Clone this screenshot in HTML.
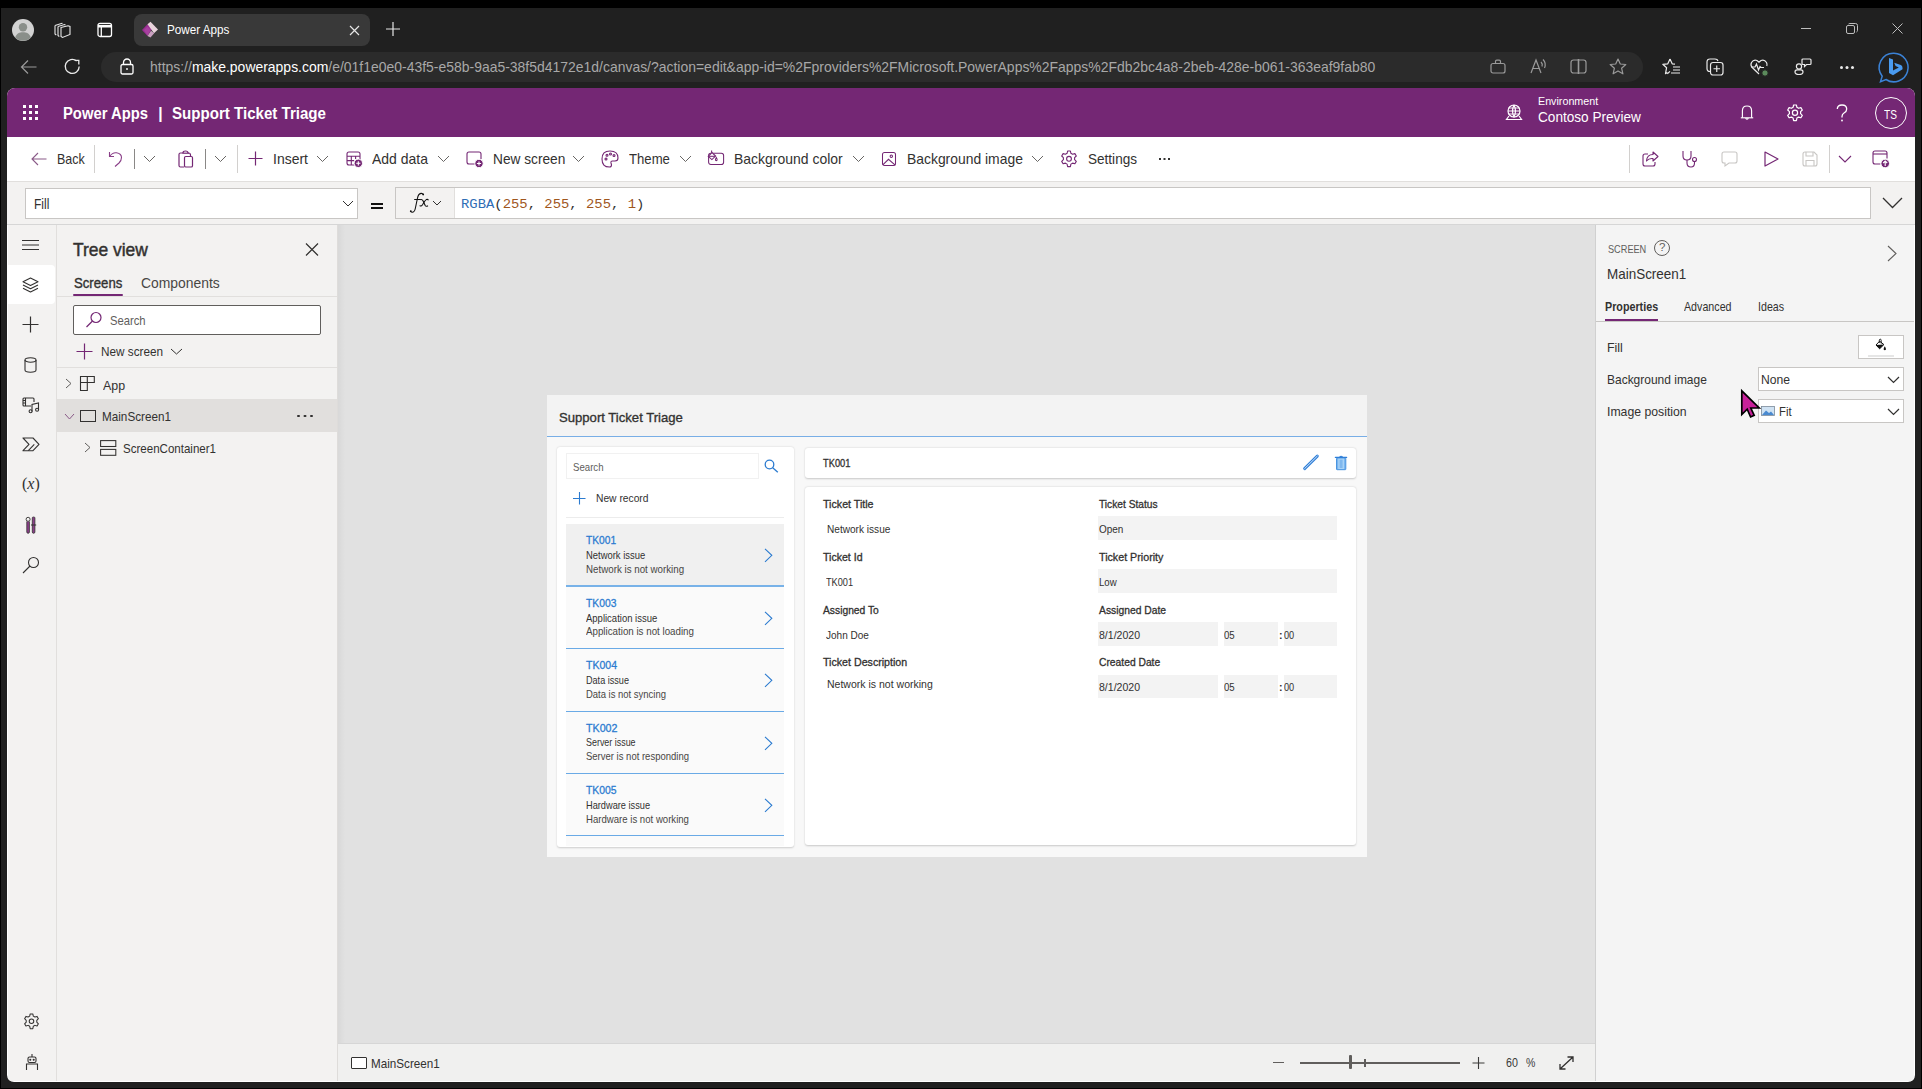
<!DOCTYPE html>
<html><head><meta charset="utf-8">
<style>
*{box-sizing:border-box;margin:0;padding:0}
html,body{width:1922px;height:1089px;overflow:hidden;background:#000;font-family:"Liberation Sans",sans-serif}
.a{position:absolute}
.t{position:absolute;white-space:nowrap;line-height:1;transform-origin:0 0}
svg{position:absolute;overflow:visible}
#win{position:absolute;left:1px;top:8px;width:1920px;height:1080px;background:#202020}
</style></head><body>

<div id="win"></div>
<!-- BROWSER CHROME -->
<div id="chrome">
  <!-- avatar -->
  <svg style="left:12px;top:19px" width="22" height="22" viewBox="0 0 22 22"><circle cx="11" cy="11" r="11" fill="#d2d2d2"/><circle cx="11" cy="8.2" r="4.2" fill="#8a8f8a"/><path d="M3.2 18.5 C4.5 14.5 7.5 13.3 11 13.3 C14.5 13.3 17.5 14.5 18.8 18.5 A11 11 0 0 1 3.2 18.5Z" fill="#8a8f8a"/></svg>
  <!-- workspaces -->
  <svg style="left:54px;top:21px" width="18" height="18" viewBox="0 0 18 18" fill="none" stroke="#e8e8e8" stroke-width="1.1"><path d="M1 4.5 L8 2.3 L8.5 2.5"/><path d="M1 4.5 V13 L2.3 14"/><path d="M4 5.5 L10.5 3.5 L11.5 4"/><path d="M4 5.5 V14.5 L5.3 15.5"/><path d="M7 6.5 L14 4.8 L16 5.5 V13.5 L8.5 16.5 L7 15.5 Z"/></svg>
  <!-- tab actions -->
  <svg style="left:97px;top:22px" width="16" height="16" viewBox="0 0 16 16" fill="none" stroke="#fff" stroke-width="1.3"><rect x="1" y="1.3" width="13.5" height="13.2" rx="2"/><path d="M1 4.2 H14.5" stroke-width="2.6"/><path d="M4.3 4 V14.5"/></svg>
  <!-- tab -->
  <div class="a" style="left:134px;top:14px;width:236px;height:32px;background:#393939;border-radius:8px"></div>
  <svg style="left:141px;top:21px" width="18" height="18" viewBox="0 0 18 18"><path d="M1 9 L6.5 3.3 L11 7.8 L6.5 15 Z" fill="#9b2e93"/><path d="M6.5 3.3 L9.5 0.8 L17 8.4 L13 12.2 Z" fill="#e9d3dc"/><path d="M6.5 15 L10 9.8 L13.2 12.2 L9.5 16.4 Z" fill="#c9a0c0"/><path d="M3 9 L6.5 5.5 L9.5 9 L6.5 14.5 Z" fill="#b04da8" opacity=".6"/></svg>
  <svg style="left:349px;top:25px" width="11" height="11" viewBox="0 0 11 11" stroke="#e6e6e6" stroke-width="1.2"><path d="M1 1 L10 10 M10 1 L1 10"/></svg>
  <svg style="left:385px;top:21px" width="16" height="16" viewBox="0 0 16 16" stroke="#e6e6e6" stroke-width="1.2"><path d="M8 1 V15 M1 8 H15"/></svg>
  <!-- window controls -->
  <div class="a" style="left:1801px;top:28px;width:10px;height:1px;background:#bdbdbd"></div>
  <svg style="left:1846px;top:23px" width="12" height="11" viewBox="0 0 12 11" fill="none" stroke="#bdbdbd" stroke-width="1"><rect x="0.5" y="2.5" width="8" height="8" rx="1.5"/><path d="M2.5 1 Q3 0.5 4 0.5 H9.5 Q11.5 0.5 11.5 2.5 V7.5 Q11.5 8.5 10.5 9"/></svg>
  <svg style="left:1892px;top:23px" width="11" height="11" viewBox="0 0 11 11" stroke="#bdbdbd" stroke-width="1"><path d="M0.5 0.5 L10.5 10.5 M10.5 0.5 L0.5 10.5"/></svg>
  <!-- nav -->
  <svg style="left:20px;top:59px" width="18" height="16" viewBox="0 0 18 16" fill="none" stroke="#9a9a9a" stroke-width="1.2"><path d="M16.5 8 H1.5 M8 1.5 L1.5 8 L8 14.5"/></svg>
  <svg style="left:64px;top:58px" width="18" height="18" viewBox="0 0 18 18" fill="none" stroke="#eaeaea" stroke-width="1.3"><path d="M15.2 8.5 A7 7 0 1 1 12.6 3"/><path d="M10.6 2.3 H14.8 V6.5" stroke-width="1.3"/></svg>
  <!-- address bar -->
  <div class="a" style="left:101px;top:52px;width:1542px;height:30px;background:#2b2b2b;border-radius:15px"></div>
  <svg style="left:120px;top:58px" width="14" height="17" viewBox="0 0 14 17" fill="none" stroke="#fff" stroke-width="1.3"><rect x="1" y="6.5" width="12" height="9.5" rx="1.5"/><path d="M3.5 6.5 V4.5 A3.5 3.5 0 0 1 10.5 4.5 V6.5"/><circle cx="7" cy="11" r=".9" fill="#fff" stroke="none"/></svg>
  <!-- in-bar icons -->
  <svg style="left:1490px;top:59px" width="16" height="15" viewBox="0 0 16 15" fill="none" stroke="#9a9a9a" stroke-width="1.2"><rect x="1" y="4.5" width="14" height="9.5" rx="2"/><path d="M5.5 4.5 V2.5 Q5.5 1.2 6.8 1.2 H9.2 Q10.5 1.2 10.5 2.5 V4.5"/></svg>
  <svg style="left:1530px;top:58px" width="17" height="16" viewBox="0 0 17 16" fill="none" stroke="#9a9a9a" stroke-width="1.2"><path d="M1 15 L6 2 L11 15 M2.8 10.5 H9.2"/><path d="M11 4 Q13 6 12 8.5"/><path d="M13 1.5 Q16.5 5 14.5 10"/></svg>
  <svg style="left:1570px;top:59px" width="17" height="15" viewBox="0 0 17 15" fill="none" stroke="#9a9a9a" stroke-width="1.2"><rect x="1" y="1" width="15" height="13" rx="2.5"/><path d="M8.5 0 V15" stroke-width="1.6"/></svg>
  <svg style="left:1609px;top:58px" width="18" height="17" viewBox="0 0 18 17" fill="none" stroke="#9a9a9a" stroke-width="1.2" stroke-linejoin="round"><path d="M9 1 L11.3 6 L16.8 6.5 L12.6 10.2 L13.9 15.8 L9 12.9 L4.1 15.8 L5.4 10.2 L1.2 6.5 L6.7 6 Z"/></svg>
  <!-- outside icons -->
  <svg style="left:1662px;top:58px" width="19" height="17" viewBox="0 0 19 17" fill="none" stroke="#eaeaea" stroke-width="1.2" stroke-linejoin="round"><path d="M8 1 L10.2 5.8 L13 6.1 M5.3 15.7 L8 13.4 M8 1 L5.8 5.8 L0.8 6.3 L4.6 9.7 L3.5 15.7 L5.3 14.6"/><path d="M11 9 H18 M11 12 H18 M9 15 H18"/></svg>
  <svg style="left:1706px;top:58px" width="18" height="18" viewBox="0 0 18 18" fill="none" stroke="#eaeaea" stroke-width="1.2"><path d="M4 13.5 Q1 13.5 1 10.5 V4 Q1 1 4 1 H9 Q11.5 1 12 3"/><rect x="4.5" y="4.5" width="12.5" height="12.5" rx="2.5"/><path d="M10.75 7.5 V14 M7.5 10.75 H14"/></svg>
  <svg style="left:1750px;top:59px" width="19" height="18" viewBox="0 0 19 18" fill="none" stroke="#eaeaea" stroke-width="1.2"><path d="M9 15 L2.5 8.8 Q0 6 1.5 3.5 Q3.5 0.2 7 1.5 L9 3.3 L11 1.5 Q14.5 0.2 16.5 3.5 Q17.5 5.5 16.8 7"/><path d="M1 8 H5 L6.5 5 L8.5 11 L10 7.5 L11 8.5 H14"/><circle cx="15" cy="14" r="3.2" fill="#5b8a5b" stroke="#202020" stroke-width="1"/></svg>
  <svg style="left:1794px;top:58px" width="18" height="17" viewBox="0 0 18 17" fill="none" stroke="#eaeaea" stroke-width="1.2"><circle cx="5" cy="8.5" r="2.6"/><path d="M1 14 Q1 11.8 3 11.8 H7 Q9 11.8 9 14 Q9 16.5 5 16.5 Q1 16.5 1 14Z"/><path d="M9 1 H16 Q17 1 17 2 V5.5 Q17 6.5 16 6.5 H12.5 L10.5 8.5 V6.5 H9 Q8 6.5 8 5.5 V2 Q8 1 9 1Z"/></svg>
  <div class="a" style="left:1840px;top:66px;width:3px;height:3px;border-radius:50%;background:#eaeaea;box-shadow:5.5px 0 0 #eaeaea,11px 0 0 #eaeaea"></div>
  <svg style="left:1878px;top:52px" width="32" height="31" viewBox="0 0 32 31"><path d="M16 1.2 A14.3 14.3 0 1 1 8 27.5 L2.5 29.8 L4.2 24.2 A14.3 14.3 0 0 1 16 1.2Z" fill="none" stroke="#3b82d6" stroke-width="1.5"/><path d="M11 6 L15 7.5 V18.5 L20.8 15.5 L17.6 14 L16.2 10.8 L22.8 13 Q24.5 13.8 24.5 15.8 V17.2 L15 23.2 L11 21 Z" fill="#4a9bf0"/></svg>
</div>
<!-- APP -->
<div class="a" id="app" style="left:7px;top:88px;width:1908px;height:994px;background:#fff;border-radius:8px 8px 7px 7px;overflow:hidden">
  <div class="a" id="hdr" style="left:0;top:0;width:1908px;height:49px;background:#742774"></div>
  <div class="a" id="tb" style="left:0;top:49px;width:1908px;height:45px;background:#fff;border-bottom:1px solid #e1dfdd"></div>
  <div class="a" id="fb" style="left:0;top:94px;width:1908px;height:43px;background:#f3f2f1;border-bottom:1px solid #d6d6d6"></div>
  <div class="a" id="rail" style="left:1px;top:137px;width:49px;height:856px;background:#f3f2f1;border-right:1px solid #e1dfdd"></div>
  <div class="a" id="tree" style="left:50px;top:137px;width:280px;height:856px;background:#f3f2f1"></div>
  <div class="a" id="canvas" style="left:330px;top:137px;width:1258px;height:856px;background:#e1e1e1"></div>
  <div class="a" id="props" style="left:1588px;top:137px;width:319px;height:856px;background:#f4f4f4;border-left:1px solid #d0d0d0"></div>
</div>

<!-- HEADER CONTENT -->
<div id="hdrc">
  <div class="a" style="left:23px;top:105px;width:3px;height:3px;background:#fff;box-shadow:6px 0 #fff,12px 0 #fff,0 6px #fff,6px 6px #fff,12px 6px #fff,0 12px #fff,6px 12px #fff,12px 12px #fff"></div>
  <svg style="left:1505px;top:104px" width="18" height="17" viewBox="0 0 18 17" fill="none" stroke="#fff" stroke-width="1.2"><circle cx="9" cy="7" r="6"/><path d="M3 7 H15 M9 1 Q6 7 9 13 Q12 7 9 1"/><path d="M3.5 4 H14.5 M3.5 10 H14.5" stroke-width=".9"/><path d="M4 12 L1.5 15.5 H16.5 L14 12" /></svg>
  <svg style="left:1740px;top:105px" width="14" height="16" viewBox="0 0 14 16" fill="none" stroke="#fff" stroke-width="1.15"><path d="M2.4 12.8 V5.8 Q2.4 1 7 1 Q11.6 1 11.6 5.8 V12.8"/><path d="M0.8 12.8 H13.2"/><path d="M5.6 13.2 Q7 15.2 8.4 13.2"/></svg>
  <svg style="left:1786px;top:104px" width="18" height="18" viewBox="0 0 18 18" fill="none" stroke="#fff" stroke-width="1.2"><path d="M7.6 1 H10.4 L10.9 3.3 L12.6 4.3 L14.9 3.6 L16.3 6 L14.6 7.7 V9.7 L16.3 11.4 L14.9 13.8 L12.6 13.1 L10.9 14.1 L10.4 16.6 H7.6 L7.1 14.1 L5.4 13.1 L3.1 13.8 L1.7 11.4 L3.4 9.7 V7.7 L1.7 6 L3.1 3.6 L5.4 4.3 L7.1 3.3 Z" stroke-linejoin="round"/><circle cx="9" cy="8.8" r="2.6"/></svg>
  <svg style="left:1836px;top:104px" width="12" height="18" viewBox="0 0 12 18" fill="none" stroke="#fff" stroke-width="1.3"><path d="M1.3 5 Q1.3 1 6 1 Q10.7 1 10.7 5 Q10.7 7.5 8 9 Q6 10.2 6 12.5 V13.5"/><circle cx="6" cy="16.5" r=".9" fill="#fff" stroke="none"/></svg>
  <div class="a" style="left:1875px;top:97px;width:32px;height:32px;border:1px solid #fff;border-radius:50%"></div>
</div>
<!-- TOOLBAR CONTENT -->
<div id="tbc" style="color:#323130">
  <svg style="left:31px;top:152px" width="16" height="14" viewBox="0 0 16 14" fill="none" stroke="#8a5a88" stroke-width="1.1"><path d="M15.5 7 H1 M7 1 L1 7 L7 13"/></svg>
  <div class="a" style="left:94px;top:145px;width:1px;height:28px;background:#d2d0ce"></div>
  <svg style="left:108px;top:151px" width="15" height="16" viewBox="0 0 15 16" fill="none" stroke="#8a3f88" stroke-width="1.1"><path d="M1.5 1 V5.5 H6"/><path d="M1.8 5.3 Q4.5 1.3 8.5 1.8 Q13.5 2.8 13.5 6.5 Q13.5 9.5 11 12 L7 15.5"/></svg>
  <div class="a" style="left:134px;top:149px;width:1px;height:20px;background:#8a8886"></div>
  <svg style="left:143px;top:155px" width="13" height="8" viewBox="0 0 13 8" fill="none" stroke="#605e5c" stroke-width="0.95"><path d="M1 1 L6.5 6.5 L12 1"/></svg>
  <svg style="left:178px;top:150px" width="16" height="18" viewBox="0 0 16 18" fill="none" stroke="#742774" stroke-width="1.2"><path d="M5 3 H2.5 Q1 3 1 4.5 V15.5 Q1 17 2.5 17 H6"/><path d="M5 3 Q5 1 7.5 1 Q10 1 10 3"/><path d="M4.5 3.2 H11"/><rect x="6.5" y="6.5" width="8" height="10.5" rx="1.3"/><path d="M10.5 3 Q12.5 3 12.5 5 V6.5"/></svg>
  <div class="a" style="left:205px;top:149px;width:1px;height:20px;background:#8a8886"></div>
  <svg style="left:214px;top:155px" width="13" height="8" viewBox="0 0 13 8" fill="none" stroke="#605e5c" stroke-width="0.95"><path d="M1 1 L6.5 6.5 L12 1"/></svg>
  <div class="a" style="left:237px;top:145px;width:1px;height:28px;background:#d2d0ce"></div>
  <svg style="left:248px;top:151px" width="15" height="15" viewBox="0 0 15 15" fill="none" stroke="#742774" stroke-width="1.2"><path d="M7.5 0.5 V14.5 M0.5 7.5 H14.5"/></svg>
  <svg style="left:316px;top:155px" width="13" height="8" viewBox="0 0 13 8" fill="none" stroke="#605e5c" stroke-width="0.95"><path d="M1 1 L6.5 6.5 L12 1"/></svg>
  <svg style="left:346px;top:151px" width="17" height="17" viewBox="0 0 17 17" fill="none" stroke="#742774" stroke-width="1.1"><rect x="1" y="1" width="13" height="13" rx="2"/><path d="M1 5.3 H14 M1 9.6 H8 M5.3 5.3 V14 M9.6 5.3 V8"/><circle cx="12.3" cy="12.3" r="4.2" fill="#742774" stroke="#fff" stroke-width="1"/><path d="M12.3 10.2 V14.4 M10.2 12.3 H14.4" stroke="#fff" stroke-width="1.1"/></svg>
  <svg style="left:437px;top:155px" width="13" height="8" viewBox="0 0 13 8" fill="none" stroke="#605e5c" stroke-width="0.95"><path d="M1 1 L6.5 6.5 L12 1"/></svg>
  <svg style="left:466px;top:151px" width="18" height="17" viewBox="0 0 18 17" fill="none" stroke="#742774" stroke-width="1.1"><path d="M9 13 H3 Q1 13 1 11 V3 Q1 1 3 1 H13 Q15 1 15 3 V8"/><circle cx="13" cy="12.5" r="4.2" fill="#742774" stroke="#fff" stroke-width="1"/><path d="M13 10.4 V14.6 M10.9 12.5 H15.1" stroke="#fff" stroke-width="1.1"/></svg>
  <svg style="left:572px;top:155px" width="13" height="8" viewBox="0 0 13 8" fill="none" stroke="#605e5c" stroke-width="0.95"><path d="M1 1 L6.5 6.5 L12 1"/></svg>
  <svg style="left:601px;top:150px" width="18" height="18" viewBox="0 0 18 18" fill="none" stroke="#742774" stroke-width="1.1"><path d="M9 1 Q17 1 17 8 Q17 11 14 11 H11.5 Q9.5 11 10 13 Q10.5 14.5 10.5 15 Q10.5 17 8.5 17 Q1 17 1 9 Q1 1 9 1Z"/><circle cx="5" cy="9" r="1"/><circle cx="6" cy="5.3" r="1"/><circle cx="9.5" cy="4" r="1"/><circle cx="13" cy="5.5" r="1"/></svg>
  <svg style="left:679px;top:155px" width="13" height="8" viewBox="0 0 13 8" fill="none" stroke="#605e5c" stroke-width="0.95"><path d="M1 1 L6.5 6.5 L12 1"/></svg>
  <svg style="left:706px;top:149px" width="20" height="18" viewBox="0 0 20 18" fill="none" stroke="#742774" stroke-width="1.05"><rect x="2.6" y="4.3" width="15" height="11.2" rx="2.3"/><path d="M2.2 7.3 L6 3.6 L9.6 7.1 L5.9 10.6 Z" fill="#fff"/><path d="M2.6 7.3 H9.4" /><path d="M5.6 3.8 V1.4"/><path d="M10.3 8.6 Q9.2 10.4 9.5 11.2 Q10.3 12 11.1 11.2 Q11.4 10.4 10.3 8.6Z"/></svg>
  <svg style="left:852px;top:155px" width="13" height="8" viewBox="0 0 13 8" fill="none" stroke="#605e5c" stroke-width="0.95"><path d="M1 1 L6.5 6.5 L12 1"/></svg>
  <svg style="left:881px;top:151px" width="16" height="16" viewBox="0 0 16 16" fill="none" stroke="#742774" stroke-width="1.05"><rect x="1.5" y="1.5" width="13" height="13" rx="2"/><circle cx="10.3" cy="5.2" r="1.2"/><path d="M1.8 13.8 L7.5 8.3 L14.2 14.2"/></svg>
  <svg style="left:1031px;top:155px" width="13" height="8" viewBox="0 0 13 8" fill="none" stroke="#605e5c" stroke-width="0.95"><path d="M1 1 L6.5 6.5 L12 1"/></svg>
  <svg style="left:1060px;top:150px" width="18" height="18" viewBox="0 0 18 18" fill="none" stroke="#742774" stroke-width="1.1" stroke-linejoin="round"><path d="M7.6 1 H10.4 L10.9 3.3 L12.6 4.3 L14.9 3.6 L16.3 6 L14.6 7.7 V9.7 L16.3 11.4 L14.9 13.8 L12.6 13.1 L10.9 14.1 L10.4 16.6 H7.6 L7.1 14.1 L5.4 13.1 L3.1 13.8 L1.7 11.4 L3.4 9.7 V7.7 L1.7 6 L3.1 3.6 L5.4 4.3 L7.1 3.3 Z"/><circle cx="9" cy="8.8" r="2.4"/></svg>
  <div class="a" style="left:1159px;top:158px;width:2px;height:2px;background:#323130;box-shadow:4.5px 0 #323130,9px 0 #323130"></div>
  <!-- right side -->
  <div class="a" style="left:1629px;top:145px;width:1px;height:28px;background:#d2d0ce"></div>
  <svg style="left:1642px;top:151px" width="17" height="16" viewBox="0 0 17 16" fill="none" stroke="#742774" stroke-width="1.1"><path d="M6 3 H3 Q1 3 1 5 V13 Q1 15 3 15 H11 Q13 15 13 13 V11"/><path d="M16 5.5 L11 1 V3.5 Q5 3.5 4.5 10 Q7 7 11 7.5 V10 Z" stroke-linejoin="round"/></svg>
  <svg style="left:1681px;top:150px" width="18" height="18" viewBox="0 0 18 18" fill="none" stroke="#742774" stroke-width="1.1"><path d="M2 1 V6 Q2 10 6 10 Q10 10 10 6 V1"/><path d="M6 10 V13 Q6 17 10 17 Q13.5 17 13.5 13 V11.5"/><circle cx="13.5" cy="9.5" r="2"/></svg>
  <svg style="left:1721px;top:151px" width="17" height="16" viewBox="0 0 17 16" fill="none" stroke="#c8c6c4" stroke-width="1.1"><path d="M3 1 H14 Q16 1 16 3 V10 Q16 12 14 12 H8 L4 15 V12 H3 Q1 12 1 10 V3 Q1 1 3 1Z"/></svg>
  <svg style="left:1764px;top:151px" width="15" height="16" viewBox="0 0 15 16" fill="none" stroke="#742774" stroke-width="1.2" stroke-linejoin="round"><path d="M1 1 L14 8 L1 15 Z"/></svg>
  <svg style="left:1802px;top:151px" width="16" height="16" viewBox="0 0 16 16" fill="none" stroke="#c8c6c4" stroke-width="1.1"><path d="M1 3 Q1 1 3 1 H12 L15 4 V13 Q15 15 13 15 H3 Q1 15 1 13 Z"/><path d="M4 1 V5 H11 V1 M4 15 V9.5 H12 V15"/></svg>
  <div class="a" style="left:1829px;top:145px;width:1px;height:28px;background:#d2d0ce"></div>
  <svg style="left:1838px;top:155px" width="14" height="8" viewBox="0 0 14 8" fill="none" stroke="#742774" stroke-width="1.1"><path d="M1 1 L7 7 L13 1"/></svg>
  <svg style="left:1872px;top:150px" width="18" height="18" viewBox="0 0 18 18" fill="none" stroke="#742774" stroke-width="1.1"><path d="M8.5 14 H3 Q1 14 1 12 V3 Q1 1 3 1 H13 Q15 1 15 3 V8.5"/><path d="M1 4 H15"/><circle cx="13.2" cy="13.5" r="4.3" fill="#742774" stroke="#fff" stroke-width="1"/><path d="M13.2 16 V11.2 M11.2 13 L13.2 11 L15.2 13" stroke="#fff" stroke-width="1.1"/></svg>
</div>
<!-- FORMULA BAR CONTENT -->
<div id="fbc">
  <div class="a" style="left:25px;top:188px;width:333px;height:31px;background:#fff;border:1px solid #c8c6c4"></div>
  <svg style="left:342px;top:200px" width="12" height="7" viewBox="0 0 12 7" fill="none" stroke="#323130" stroke-width="1"><path d="M1 1 L6 6 L11 1"/></svg>
  <div class="a" style="left:371px;top:203px;width:12px;height:2px;background:#111;box-shadow:0 4px #111"></div>
  <div class="a" style="left:395px;top:187px;width:1476px;height:32px;background:#fff;border:1px solid #c8c6c4"></div>
  <div class="a" style="left:396px;top:188px;width:59px;height:30px;background:#f3f2f1;border-right:1px solid #e1dfdd"></div>
  <svg style="left:432px;top:200px" width="10" height="6" viewBox="0 0 10 6" fill="none" stroke="#323130" stroke-width="1"><path d="M1 1 L5 5 L9 1"/></svg>
  <svg style="left:1882px;top:197px" width="21" height="12" viewBox="0 0 21 12" fill="none" stroke="#323130" stroke-width="1.3"><path d="M1 1 L10.5 10.5 L20 1"/></svg>
</div>

<svg style="left:405px;top:190px" width="26" height="26" viewBox="0 0 26 26" fill="none" stroke="#111" stroke-width="1.1" stroke-linecap="round"><path d="M18.3 4.6 Q17.6 3.2 16 3.4 Q13.3 3.8 12.4 8.5 L10.3 18.5 Q9.5 22.4 7 22.2 Q5.8 22 5.6 21.3"/><path d="M9.6 9.5 H15"/><path d="M15.6 9.6 Q17 9 18 10.8 L20.2 15.4 Q21 16.8 22.6 15.9"/><path d="M23.2 9.8 Q22.6 9 21.3 9.6 Q20.3 10.2 19.2 12 L17.5 14.8 Q16.3 16.6 15 15.8"/><circle cx="18.2" cy="4.4" r=".9" fill="#111" stroke="none"/><circle cx="5.8" cy="21.2" r=".9" fill="#111" stroke="none"/></svg>
<!-- LEFT RAIL -->
<div id="railc">
  <div class="a" style="left:22px;top:240px;width:17px;height:1px;background:#323130;box-shadow:0 4.5px #323130,0 9px #323130"></div>
  <div class="a" style="left:7px;top:265px;width:48px;height:39px;background:#fff;border-radius:0 4px 4px 0"></div>
  <svg style="left:22px;top:277px" width="17" height="16" viewBox="0 0 17 16" fill="none" stroke="#323130" stroke-width="1.1" stroke-linejoin="round"><path d="M8.5 1 L16 4.8 L8.5 8.6 L1 4.8 Z"/><path d="M1 8 L8.5 11.8 L16 8"/><path d="M1 11.2 L8.5 15 L16 11.2"/></svg>
  <svg style="left:22px;top:316px" width="17" height="17" viewBox="0 0 17 17" fill="none" stroke="#323130" stroke-width="1.2"><path d="M8.5 0.5 V16.5 M0.5 8.5 H16.5"/></svg>
  <svg style="left:24px;top:357px" width="13" height="16" viewBox="0 0 13 16" fill="none" stroke="#323130" stroke-width="1.1"><ellipse cx="6.5" cy="3" rx="5.5" ry="2.2"/><path d="M1 3 V13 Q1 15.2 6.5 15.2 Q12 15.2 12 13 V3"/></svg>
  <svg style="left:22px;top:397px" width="18" height="16" viewBox="0 0 18 16" fill="none" stroke="#323130" stroke-width="1.1"><path d="M9 9 H2 Q1 9 1 8 V2 Q1 1 2 1 H11 Q12 1 12 2 V5"/><path d="M3.5 1 V9 M1 3.5 H3.5 M1 6 H3.5"/><path d="M10 14.5 V7.5 L16.5 6 V13"/><circle cx="8.6" cy="14.2" r="1.5"/><circle cx="15.1" cy="12.8" r="1.5"/></svg>
  <svg style="left:22px;top:437px" width="18" height="15" viewBox="0 0 18 15" fill="none" stroke="#323130" stroke-width="1.1" stroke-linejoin="round"><path d="M1 1 H11 L17 7.3 L11 13.7 H1 L7 7.3 Z"/><path d="M6.3 13.7 L12.3 7.3"/></svg>
  <div class="a" style="left:22px;top:476px;font-family:'Liberation Serif',serif;font-size:16px;line-height:1;color:#323130;white-space:nowrap">(<i>x</i>)</div>
  <svg style="left:25px;top:516px" width="12" height="18" viewBox="0 0 12 18"><path d="M1.8 5.5 V16 Q1.8 17.3 3.1 17.3 Q4.4 17.3 4.4 16 V5.5" fill="#8b3f8a" stroke="#323130" stroke-width=".8"/><circle cx="3.1" cy="3.3" r="2" fill="none" stroke="#323130" stroke-width=".9"/><path d="M7.3 1.8 Q7.3 1 8.6 1 Q9.9 1 9.9 1.8 V16 Q9.9 17.3 8.6 17.3 Q7.3 17.3 7.3 16 Z" fill="#8b3f8a" stroke="#323130" stroke-width=".8"/><path d="M6 9 H11.2" stroke="#323130" stroke-width="1"/></svg>
  <svg style="left:22px;top:556px" width="18" height="18" viewBox="0 0 18 18" fill="none" stroke="#323130" stroke-width="1.1"><circle cx="11.5" cy="6.5" r="5"/><path d="M8 10 L1 17"/></svg>
  <svg style="left:23px;top:1013px" width="17" height="17" viewBox="0 0 18 18" fill="none" stroke="#323130" stroke-width="1.1" stroke-linejoin="round"><path d="M7.6 1 H10.4 L10.9 3.3 L12.6 4.3 L14.9 3.6 L16.3 6 L14.6 7.7 V9.7 L16.3 11.4 L14.9 13.8 L12.6 13.1 L10.9 14.1 L10.4 16.6 H7.6 L7.1 14.1 L5.4 13.1 L3.1 13.8 L1.7 11.4 L3.4 9.7 V7.7 L1.7 6 L3.1 3.6 L5.4 4.3 L7.1 3.3 Z"/><circle cx="9" cy="8.8" r="2.4"/></svg>
  <svg style="left:25px;top:1053px" width="14" height="18" viewBox="0 0 14 18" fill="none" stroke="#323130" stroke-width="1.1"><path d="M7 1 V4"/><rect x="3" y="4" width="8" height="5.5" rx="1.5"/><path d="M1.5 17 V11 H12.5 V17"/><circle cx="5.3" cy="6.7" r=".5" fill="#742774"/><circle cx="8.7" cy="6.7" r=".5" fill="#742774"/></svg>
</div>
<!-- TREE PANEL -->
<div id="treec">
  <svg style="left:305px;top:243px" width="14" height="13" viewBox="0 0 14 13" stroke="#323130" stroke-width="1.2"><path d="M1 0.5 L13 12.5 M13 0.5 L1 12.5"/></svg>
  <div class="a" style="left:73px;top:294px;width:50px;height:2px;background:#742774;border-radius:1px"></div>
  <div class="a" style="left:57px;top:296px;width:280px;height:1px;background:#e1dfdd"></div>
  <div class="a" style="left:73px;top:305px;width:248px;height:30px;background:#fff;border:1px solid #605e5c;border-radius:2px"></div>
  <svg style="left:85px;top:311px" width="18" height="18" viewBox="0 0 18 18" fill="none" stroke="#742774" stroke-width="1.2"><circle cx="11" cy="6.5" r="5"/><path d="M7.5 10 L1.5 16"/></svg>
  <svg style="left:76px;top:343px" width="17" height="17" viewBox="0 0 17 17" fill="none" stroke="#742774" stroke-width="1.2"><path d="M8.5 0.5 V16.5 M0.5 8.5 H16.5"/></svg>
  <svg style="left:170px;top:348px" width="13" height="7" viewBox="0 0 13 7" fill="none" stroke="#323130" stroke-width="1"><path d="M1 1 L6.5 6 L12 1"/></svg>
  <div class="a" style="left:57px;top:367px;width:280px;height:1px;background:#e1dfdd"></div>
  <svg style="left:65px;top:378px" width="7" height="11" viewBox="0 0 7 11" fill="none" stroke="#605e5c" stroke-width="1"><path d="M1 1 L6 5.5 L1 10"/></svg>
  <svg style="left:80px;top:376px" width="16" height="15" viewBox="0 0 16 15" fill="none" stroke="#323130" stroke-width="1.1"><path d="M0.5 0.5 H14.3 V6.5 H7.3 V14.5 H0.5 Z M0.5 6.5 H7.3 M7.3 0.5 V6.5"/></svg>
  <div class="a" style="left:57px;top:399px;width:280px;height:33px;background:#e1dfdd"></div>
  <svg style="left:64px;top:413px" width="11" height="7" viewBox="0 0 11 7" fill="none" stroke="#8a5a88" stroke-width="1"><path d="M1 1 L5.5 6 L10 1"/></svg>
  <div class="a" style="left:80px;top:410px;width:16px;height:12px;border:1.1px solid #323130"></div>
  <div class="a" style="left:297px;top:414.5px;width:2.5px;height:2.5px;background:#323130;border-radius:50%;box-shadow:6.5px 0 #323130,13px 0 #323130"></div>
  <svg style="left:84px;top:442px" width="7" height="11" viewBox="0 0 7 11" fill="none" stroke="#605e5c" stroke-width="1"><path d="M1 1 L6 5.5 L1 10"/></svg>
  <svg style="left:100px;top:440px" width="17" height="16" viewBox="0 0 17 16" fill="none" stroke="#323130" stroke-width="1.05"><rect x="0.6" y="0.6" width="15.2" height="5.9"/><rect x="0.6" y="9.4" width="15.2" height="5.9"/></svg>
</div>
<!-- CANVAS -->
<div id="canvasc">
  <div class="a" style="left:338px;top:225px;width:7px;height:818px;background:linear-gradient(90deg,rgba(0,0,0,.04),rgba(0,0,0,0))"></div>
  <div class="a" style="left:337px;top:225px;width:1px;height:856px;background:#dedcda"></div>
  <div class="a" style="left:547px;top:395px;width:820px;height:462px;background:#f8f8f8"></div>
  <div class="a" style="left:547px;top:395px;width:820px;height:42px;background:#f3f3f3;border-bottom:1.5px solid #78aee6"></div>
  <!-- gallery card -->
  <div class="a" style="left:557px;top:447px;width:237px;height:400px;background:#fff;border-radius:3px;box-shadow:0 0.5px 2px rgba(0,0,0,.18)"></div>
  <div class="a" style="left:566px;top:453px;width:193px;height:26px;background:#fff;border:1px solid #f1f1f1"></div>
  <svg style="left:764px;top:459px" width="15" height="14" viewBox="0 0 15 14" fill="none" stroke="#2b7bd0" stroke-width="1.3"><circle cx="5.5" cy="5.5" r="4.3"/><path d="M8.7 8.7 L13.8 13.3"/></svg>
  <svg style="left:573px;top:492px" width="13" height="13" viewBox="0 0 13 13" fill="none" stroke="#2b7bd0" stroke-width="1.1"><path d="M6.5 0 V12.5 M0 6.5 H12.5"/></svg>
  <div class="a" style="left:566px;top:517px;width:218px;height:1px;background:#ececec"></div>
  <div class="a" style="left:566px;top:524px;width:218px;height:322px;background:#fafafa"></div>
  <div class="a" style="left:566px;top:524px;width:218px;height:61px;background:#f0f0f0"></div>
  <div class="a" style="left:566px;top:585px;width:218px;height:1.6px;background:#78b2e8"></div>
  <div class="a" style="left:566px;top:648px;width:218px;height:1.3px;background:#6aaae6"></div>
  <div class="a" style="left:566px;top:710.5px;width:218px;height:1.3px;background:#6aaae6"></div>
  <div class="a" style="left:566px;top:773px;width:218px;height:1.3px;background:#6aaae6"></div>
  <div class="a" style="left:566px;top:835px;width:218px;height:1.3px;background:#6aaae6"></div>
  <svg style="left:764px;top:548px" width="9" height="15" viewBox="0 0 9 15" fill="none" stroke="#2b7bd0" stroke-width="1.1"><path d="M1 0.8 L7.8 7.3 L1 13.8"/></svg>
  <svg style="left:764px;top:610.6px" width="9" height="15" viewBox="0 0 9 15" fill="none" stroke="#2b7bd0" stroke-width="1.1"><path d="M1 0.8 L7.8 7.3 L1 13.8"/></svg>
  <svg style="left:764px;top:673.2px" width="9" height="15" viewBox="0 0 9 15" fill="none" stroke="#2b7bd0" stroke-width="1.1"><path d="M1 0.8 L7.8 7.3 L1 13.8"/></svg>
  <svg style="left:764px;top:735.8px" width="9" height="15" viewBox="0 0 9 15" fill="none" stroke="#2b7bd0" stroke-width="1.1"><path d="M1 0.8 L7.8 7.3 L1 13.8"/></svg>
  <svg style="left:764px;top:798.4px" width="9" height="15" viewBox="0 0 9 15" fill="none" stroke="#2b7bd0" stroke-width="1.1"><path d="M1 0.8 L7.8 7.3 L1 13.8"/></svg>
  <!-- detail header card -->
  <div class="a" style="left:805px;top:448px;width:551px;height:30px;background:#fff;border-radius:3px;box-shadow:0 0.5px 2px rgba(0,0,0,.2)"></div>
  <svg style="left:1300px;top:452px" width="22" height="22" viewBox="0 0 22 22" fill="none" stroke-linecap="round"><path d="M4.6 16.6 L17.3 4.1" stroke="#2f7fd8" stroke-width="2.9"/><path d="M4.6 16.6 L17.3 4.1" stroke="#e8f2fc" stroke-width="0.9"/></svg>
  <svg style="left:1334px;top:455px" width="14" height="16" viewBox="0 0 14 16"><rect x="2.5" y="3" width="9.3" height="11.7" rx=".6" fill="#78b4ee" stroke="#4a95e0" stroke-width="1"/><rect x="4.2" y="3.6" width="5.9" height="10.4" fill="#a9d3f7"/><rect x="5.6" y="4.6" width="3" height="8.4" fill="#80b8ee"/><path d="M1.4 2.4 H12.6" stroke="#2f7fd8" stroke-width="1.3" stroke-linecap="round"/><path d="M5.6 1.8 Q7 0.8 8.6 1.8" stroke="#2f7fd8" stroke-width="1.1" fill="none"/></svg>
  <!-- detail body card -->
  <div class="a" style="left:805px;top:487px;width:551px;height:358px;background:#fff;border-radius:3px;box-shadow:0 0.5px 2px rgba(0,0,0,.2)"></div>
  <div class="a" style="left:1098px;top:516px;width:239px;height:24px;background:#f3f3f3"></div>
  <div class="a" style="left:1098px;top:569px;width:239px;height:24px;background:#f3f3f3"></div>
  <div class="a" style="left:1098px;top:622px;width:120px;height:24px;background:#f3f3f3"></div>
  <div class="a" style="left:1224px;top:622px;width:54px;height:24px;background:#f3f3f3"></div>
  <div class="a" style="left:1284px;top:622px;width:53px;height:24px;background:#f3f3f3"></div>
  <div class="a" style="left:1098px;top:675px;width:120px;height:23px;background:#f3f3f3"></div>
  <div class="a" style="left:1224px;top:675px;width:54px;height:23px;background:#f3f3f3"></div>
  <div class="a" style="left:1284px;top:675px;width:53px;height:23px;background:#f3f3f3"></div>
</div>
<!-- BOTTOM BAR -->
<div id="botc">
  <div class="a" style="left:338px;top:1043px;width:1257px;height:38px;background:#f0f0ef;border-top:1px solid #d6d6d6"></div>
  <div class="a" style="left:351px;top:1057px;width:16px;height:12px;border:1px solid #323130;border-radius:1px;background:#fff"></div>
  <div class="a" style="left:1273px;top:1062px;width:11px;height:1px;background:#605e5c"></div>
  <div class="a" style="left:1300px;top:1062px;width:160px;height:2px;background:#605e5c"></div>
  <div class="a" style="left:1349px;top:1055px;width:3px;height:14px;background:#605e5c;border-radius:1px"></div>
  <div class="a" style="left:1364px;top:1059px;width:1.5px;height:8px;background:#605e5c"></div>
  <svg style="left:1472px;top:1057px" width="13" height="12" viewBox="0 0 13 12" stroke="#3b3a39" stroke-width="1.1"><path d="M6.5 0 V12 M0.5 6 H12.5"/></svg>
  <svg style="left:1559px;top:1056px" width="15" height="14" viewBox="0 0 15 14" fill="none" stroke="#323130" stroke-width="1.3"><path d="M1 13 L14 1 M8.5 1 H14 V6 M1 8 V13 H6.5"/></svg>
</div>
<!-- PROPS PANEL -->
<div id="propc">
  <div class="a" style="left:1654px;top:240px;width:16px;height:16px;border:1px solid #605e5c;border-radius:50%"></div>
  <div class="a" style="left:1659px;top:242px;font-size:11.5px;line-height:1;color:#605e5c">?</div>
  <svg style="left:1887px;top:245px" width="10" height="17" viewBox="0 0 10 17" fill="none" stroke="#605e5c" stroke-width="1.1"><path d="M1 1 L9 8.5 L1 16"/></svg>
  <div class="a" style="left:1605px;top:319px;width:53px;height:2px;background:#742774"></div>
  <div class="a" style="left:1596px;top:321px;width:318px;height:1px;background:#c8c6c4"></div>
  <div class="a" style="left:1858px;top:335px;width:46px;height:24px;background:#fff;border:1px solid #c8c6c4"></div>
  <svg style="left:1870px;top:336px" width="20" height="18" viewBox="0 0 20 18"><path d="M6 9 L9.6 5.2 L13.9 8.6 L9.6 12.8 Z" fill="#fff" stroke="#111" stroke-width="1"/><path d="M6 9 L13.9 8.6 L9.6 12.8 Z" fill="#111"/><path d="M9.3 7 V4.3 Q9.3 3.2 10.3 3.2 Q11.2 3.2 11.2 4.3 V7.5" fill="none" stroke="#111" stroke-width=".9"/><path d="M14.8 10.2 Q13.2 12.6 13.6 13.6 Q14.8 14.9 16 13.6 Q16.3 12.6 14.8 10.2Z" fill="#111"/></svg>
  <div class="a" style="left:1868px;top:355px;width:26px;height:1.5px;background:#e6e6e6"></div>
  <div class="a" style="left:1758px;top:367px;width:146px;height:24px;background:#fff;border:1px solid #c8c6c4"></div>
  <svg style="left:1887px;top:376px" width="13" height="8" viewBox="0 0 13 8" fill="none" stroke="#323130" stroke-width="1.2"><path d="M1 1 L6.5 6.5 L12 1"/></svg>
  <div class="a" style="left:1758px;top:399px;width:146px;height:24px;background:#fff;border:1px solid #c8c6c4"></div>
  <svg style="left:1887px;top:407.5px" width="13" height="8" viewBox="0 0 13 8" fill="none" stroke="#323130" stroke-width="1.2"><path d="M1 1 L6.5 6.5 L12 1"/></svg>
  <svg style="left:1761px;top:406px" width="14" height="10" viewBox="0 0 14 10"><rect x="0.5" y="0.5" width="13" height="9" fill="#cfe2f3" stroke="#7a8a9a" stroke-width=".8"/><path d="M1 9 L5 4.5 L8 7 L10 5.5 L13 9 Z" fill="#4a8ad0"/></svg>
  <svg style="left:1740px;top:389px" width="22" height="30" viewBox="0 0 22 30"><path d="M1.8 1.8 L1.8 25.5 L7.2 20.2 L10.6 28 L14.2 26.4 L10.8 19 L19.2 19 Z" fill="#c8219a" stroke="#000" stroke-width="1.7" stroke-linejoin="miter"/></svg>
</div>

<div class="t" style="left:167.12px;top:23.00px;font-size:13.37px;color:#ffffff;transform:scaleX(0.8760);">Power Apps</div>
<div class="t" style="left:149.67px;top:60.00px;font-size:14.97px;color:#a8a8a8;transform:scaleX(0.9319);">https://<span style="color:#fff">make.powerapps.com</span>/e/01f1e0e0-43f5-e58b-9aa5-38f5d4172e1d/canvas/?action=edit&amp;app-id=%2Fproviders%2FMicrosoft.PowerApps%2Fapps%2Fdb2bc4a8-2beb-428e-b061-363eaf9fab80</div>
<div class="t" style="left:62.95px;top:106.00px;font-size:15.6px;color:#ffffff;font-weight:bold;transform:scaleX(0.9492);">Power Apps</div>
<div class="t" style="left:158.20px;top:106.00px;font-size:15.6px;color:#ffffff;font-weight:bold;">|</div>
<div class="t" style="left:171.70px;top:106.00px;font-size:15.6px;color:#ffffff;font-weight:bold;transform:scaleX(0.9675);">Support Ticket Triage</div>
<div class="t" style="left:1538.00px;top:96.00px;font-size:11.4px;color:#ffffff;transform:scaleX(0.9417);">Environment</div>
<div class="t" style="left:1538.00px;top:110.00px;font-size:14.97px;color:#ffffff;transform:scaleX(0.9088);">Contoso Preview</div>
<div class="t" style="left:1884.00px;top:109.00px;font-size:12.65px;color:#ffffff;transform:scaleX(0.8015);">TS</div>
<div class="t" style="left:56.92px;top:152.00px;font-size:14.2px;color:#323130;transform:scaleX(0.8808);">Back</div>
<div class="t" style="left:273.02px;top:152.00px;font-size:14.2px;color:#323130;transform:scaleX(0.9843);">Insert</div>
<div class="t" style="left:372.00px;top:152.00px;font-size:14.2px;color:#323130;transform:scaleX(0.9840);">Add data</div>
<div class="t" style="left:492.53px;top:152.00px;font-size:14.2px;color:#323130;transform:scaleX(0.9655);">New screen</div>
<div class="t" style="left:629.00px;top:152.00px;font-size:14.2px;color:#323130;transform:scaleX(0.9262);">Theme</div>
<div class="t" style="left:733.62px;top:152.00px;font-size:14.2px;color:#323130;transform:scaleX(0.9846);">Background color</div>
<div class="t" style="left:906.62px;top:152.00px;font-size:14.2px;color:#323130;transform:scaleX(0.9795);">Background image</div>
<div class="t" style="left:1087.60px;top:152.00px;font-size:14.2px;color:#323130;transform:scaleX(0.9556);">Settings</div>
<div class="t" style="left:33.73px;top:198.00px;font-size:13.8px;color:#323130;transform:scaleX(0.8697);">Fill</div>
<div class="t" style="left:460.98px;top:198.00px;font-size:13.6px;color:#333333;font-family:'Liberation Mono',monospace;transform:scaleX(1.0209);"><span style="color:#2f6db5">RGBA</span>(<span style="color:#a0561c">255</span>, <span style="color:#a0561c">255</span>, <span style="color:#a0561c">255</span>, <span style="color:#a0561c">1</span>)</div>
<div class="t" style="left:73.30px;top:241.00px;font-size:18.2px;color:#323130;-webkit-text-stroke:0.46px #323130;transform:scaleX(0.9579);">Tree view</div>
<div class="t" style="left:74.00px;top:276.00px;font-size:14.2px;color:#323130;-webkit-text-stroke:0.35px #323130;transform:scaleX(0.9278);">Screens</div>
<div class="t" style="left:141.30px;top:276.00px;font-size:14.2px;color:#484644;transform:scaleX(0.9795);">Components</div>
<div class="t" style="left:109.80px;top:314.00px;font-size:13.5px;color:#605e5c;transform:scaleX(0.8328);">Search</div>
<div class="t" style="left:100.63px;top:345.00px;font-size:13.5px;color:#323130;transform:scaleX(0.8714);">New screen</div>
<div class="t" style="left:103.00px;top:379.00px;font-size:13.5px;color:#323130;transform:scaleX(0.9187);">App</div>
<div class="t" style="left:102.13px;top:410.00px;font-size:13.5px;color:#323130;transform:scaleX(0.8676);">MainScreen1</div>
<div class="t" style="left:123.00px;top:442.00px;font-size:13.5px;color:#323130;transform:scaleX(0.8550);">ScreenContainer1</div>
<div class="t" style="left:1608.30px;top:244.00px;font-size:11.5px;color:#605e5c;transform:scaleX(0.7980);">SCREEN</div>
<div class="t" style="left:1606.77px;top:267.00px;font-size:14.5px;color:#323130;transform:scaleX(0.9280);">MainScreen1</div>
<div class="t" style="left:1605.30px;top:301.00px;font-size:12.6px;color:#323130;font-weight:bold;transform:scaleX(0.8525);">Properties</div>
<div class="t" style="left:1684.00px;top:301.00px;font-size:12.6px;color:#323130;transform:scaleX(0.8481);">Advanced</div>
<div class="t" style="left:1757.55px;top:301.00px;font-size:12.6px;color:#323130;transform:scaleX(0.8471);">Ideas</div>
<div class="t" style="left:1607.31px;top:342.00px;font-size:12.6px;color:#323130;transform:scaleX(0.9868);">Fill</div>
<div class="t" style="left:1607.05px;top:374.00px;font-size:12.6px;color:#323130;transform:scaleX(0.9509);">Background image</div>
<div class="t" style="left:1761.43px;top:374.00px;font-size:12.6px;color:#323130;transform:scaleX(0.9655);">None</div>
<div class="t" style="left:1607.03px;top:406.00px;font-size:12.6px;color:#323130;transform:scaleX(0.9728);">Image position</div>
<div class="t" style="left:1778.70px;top:406.00px;font-size:12.6px;color:#323130;transform:scaleX(0.8969);">Fit</div>
<div class="t" style="left:371.11px;top:1057.00px;font-size:13.2px;color:#323130;transform:scaleX(0.8852);">MainScreen1</div>
<div class="t" style="left:1506.00px;top:1057.00px;font-size:12.6px;color:#3b3a39;transform:scaleX(0.8498);">60</div>
<div class="t" style="left:1526.00px;top:1057.00px;font-size:12.6px;color:#3b3a39;transform:scaleX(0.8364);">%</div>
<div class="t" style="left:559.40px;top:411.00px;font-size:13.6px;color:#323130;-webkit-text-stroke:0.34px #323130;transform:scaleX(0.9643);">Support Ticket Triage</div>
<div class="t" style="left:573.40px;top:462.00px;font-size:10.6px;color:#605e5c;transform:scaleX(0.9087);">Search</div>
<div class="t" style="left:596.00px;top:494.00px;font-size:10.4px;color:#323130;transform:scaleX(0.9879);">New record</div>
<div class="t" style="left:585.80px;top:535.00px;font-size:11.8px;color:#2b7bd0;-webkit-text-stroke:0.30px #2b7bd0;transform:scaleX(0.8656);">TK001</div>
<div class="t" style="left:585.80px;top:551.00px;font-size:10.3px;color:#323130;transform:scaleX(0.9148);">Network issue</div>
<div class="t" style="left:585.80px;top:565.00px;font-size:10.3px;color:#484644;transform:scaleX(0.9475);">Network is not working</div>
<div class="t" style="left:585.80px;top:598.00px;font-size:11.8px;color:#2b7bd0;-webkit-text-stroke:0.30px #2b7bd0;transform:scaleX(0.8751);">TK003</div>
<div class="t" style="left:585.80px;top:614.00px;font-size:10.3px;color:#323130;transform:scaleX(0.9220);">Application issue</div>
<div class="t" style="left:585.80px;top:627.00px;font-size:10.3px;color:#484644;transform:scaleX(0.9476);">Application is not loading</div>
<div class="t" style="left:585.80px;top:660.00px;font-size:11.8px;color:#2b7bd0;-webkit-text-stroke:0.30px #2b7bd0;transform:scaleX(0.8921);">TK004</div>
<div class="t" style="left:585.80px;top:676.00px;font-size:10.3px;color:#323130;transform:scaleX(0.8830);">Data issue</div>
<div class="t" style="left:585.80px;top:690.00px;font-size:10.3px;color:#484644;transform:scaleX(0.9190);">Data is not syncing</div>
<div class="t" style="left:585.80px;top:723.00px;font-size:11.8px;color:#2b7bd0;-webkit-text-stroke:0.30px #2b7bd0;transform:scaleX(0.9065);">TK002</div>
<div class="t" style="left:585.80px;top:738.00px;font-size:10.3px;color:#323130;transform:scaleX(0.8661);">Server issue</div>
<div class="t" style="left:585.80px;top:752.00px;font-size:10.3px;color:#484644;transform:scaleX(0.9224);">Server is not responding</div>
<div class="t" style="left:585.80px;top:785.00px;font-size:11.8px;color:#2b7bd0;-webkit-text-stroke:0.30px #2b7bd0;transform:scaleX(0.8808);">TK005</div>
<div class="t" style="left:585.80px;top:801.00px;font-size:10.3px;color:#323130;transform:scaleX(0.8954);">Hardware issue</div>
<div class="t" style="left:585.80px;top:815.00px;font-size:10.3px;color:#484644;transform:scaleX(0.9321);">Hardware is not working</div>
<div class="t" style="left:823.10px;top:458.00px;font-size:10.6px;color:#323130;-webkit-text-stroke:0.30px #323130;transform:scaleX(0.8780);">TK001</div>
<div class="t" style="left:823.10px;top:499.00px;font-size:10.8px;color:#323130;-webkit-text-stroke:0.30px #323130;transform:scaleX(0.9867);">Ticket Title</div>
<div class="t" style="left:823.00px;top:552.00px;font-size:10.8px;color:#323130;-webkit-text-stroke:0.30px #323130;transform:scaleX(0.9779);">Ticket Id</div>
<div class="t" style="left:823.00px;top:605.00px;font-size:10.8px;color:#323130;-webkit-text-stroke:0.30px #323130;transform:scaleX(0.9522);">Assigned To</div>
<div class="t" style="left:823.00px;top:657.00px;font-size:10.8px;color:#323130;-webkit-text-stroke:0.30px #323130;transform:scaleX(0.9860);">Ticket Description</div>
<div class="t" style="left:1098.50px;top:499.00px;font-size:10.8px;color:#323130;-webkit-text-stroke:0.30px #323130;transform:scaleX(0.9440);">Ticket Status</div>
<div class="t" style="left:1098.50px;top:552.00px;font-size:10.8px;color:#323130;-webkit-text-stroke:0.30px #323130;transform:scaleX(0.9910);">Ticket Priority</div>
<div class="t" style="left:1098.50px;top:605.00px;font-size:10.8px;color:#323130;-webkit-text-stroke:0.30px #323130;transform:scaleX(0.9556);">Assigned Date</div>
<div class="t" style="left:1098.50px;top:657.00px;font-size:10.8px;color:#323130;-webkit-text-stroke:0.30px #323130;transform:scaleX(0.9531);">Created Date</div>
<div class="t" style="left:826.50px;top:524.00px;font-size:10.6px;color:#323130;transform:scaleX(0.9530);">Network issue</div>
<div class="t" style="left:826.00px;top:577.00px;font-size:10.6px;color:#323130;transform:scaleX(0.8684);">TK001</div>
<div class="t" style="left:826.00px;top:630.00px;font-size:10.6px;color:#323130;transform:scaleX(0.9459);">John Doe</div>
<div class="t" style="left:826.50px;top:679.00px;font-size:10.6px;color:#323130;transform:scaleX(0.9928);">Network is not working</div>
<div class="t" style="left:1098.50px;top:524.00px;font-size:10.6px;color:#323130;transform:scaleX(0.9415);">Open</div>
<div class="t" style="left:1098.50px;top:577.00px;font-size:10.6px;color:#323130;transform:scaleX(0.9099);">Low</div>
<div class="t" style="left:1098.50px;top:630.00px;font-size:10.6px;color:#323130;transform:scaleX(0.9941);">8/1/2020</div>
<div class="t" style="left:1224.00px;top:630.00px;font-size:10.6px;color:#323130;transform:scaleX(0.9082);">05</div>
<div class="t" style="left:1284.40px;top:630.00px;font-size:10.6px;color:#323130;transform:scaleX(0.8661);">00</div>
<div class="t" style="left:1098.50px;top:682.00px;font-size:10.6px;color:#323130;transform:scaleX(0.9941);">8/1/2020</div>
<div class="t" style="left:1224.00px;top:682.00px;font-size:10.6px;color:#323130;transform:scaleX(0.9082);">05</div>
<div class="t" style="left:1284.40px;top:682.00px;font-size:10.6px;color:#323130;transform:scaleX(0.8661);">00</div>
<div class="t" style="left:1279.00px;top:630.00px;font-size:10.6px;color:#323130;font-weight:bold;">:</div>
<div class="t" style="left:1279.00px;top:682.00px;font-size:10.6px;color:#323130;font-weight:bold;">:</div>
</body></html>
